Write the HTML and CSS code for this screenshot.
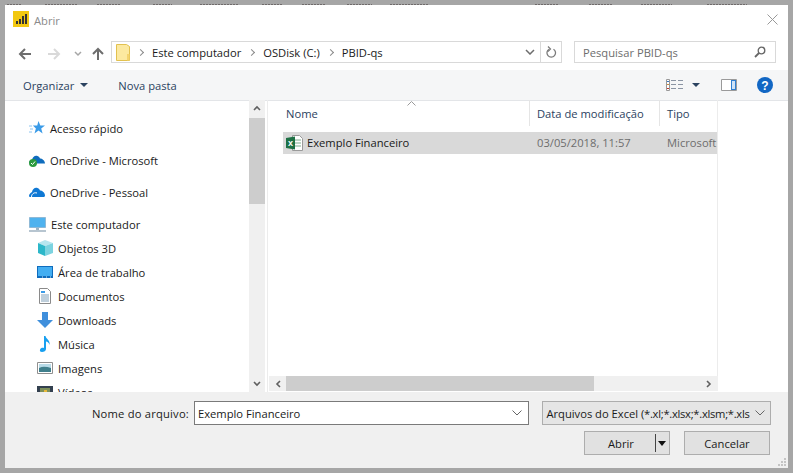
FILE: index.html
```html
<!DOCTYPE html>
<html lang="en">
<head>
    <meta charset="UTF-8">
    <title>Abrir</title>
    <link rel="stylesheet" href="styles.css">
</head>
<body>
<!-- bits of the window behind the dialog, showing above its top edge -->
<svg class="backdrop" width="793" height="5" viewBox="0 0 793 5">
    <path d="M7 4.5h15M45 4.5h33M97 4.5h23M153 4.5h19M200 4.5h38M262 4.5h21M302 4.5h23M347 4.5h25M390 4.5h38M535 4.5h23M589 4.5h24M641 4.5h31M707 4.5h40" stroke="#6f6a6a" stroke-dasharray="2 1" fill="none"/>
</svg>
<div class="dialog">
    <div class="titlebar">
        <svg class="appicon" width="16" height="16" viewBox="0 0 16 16">
            <rect width="16" height="16" fill="#f2c811"/>
            <path d="M3 10h2v3H3zM6 8h2v5H6zM9 5h2v8H9zM12 3h2v10h-2z" fill="#333"/>
        </svg>
        <span class="title">Abrir</span>
        <svg class="close" width="11" height="11" viewBox="0 0 11 11">
            <path d="M.5.5l10 10M10.5.5l-10 10" stroke="#999" fill="none"/>
        </svg>
    </div>

    <div class="navbar">
        <svg class="nav-arrows" width="90" height="16" viewBox="0 0 90 16">
            <path d="M13 8H2M7 3L2 8l5 5" stroke="#6d6d6d" stroke-width="2" fill="none"/>
            <path d="M30 8h11M36 3l5 5-5 5" stroke="#d9d9d9" stroke-width="2" fill="none"/>
            <path d="M57 6l3 3 3-3" stroke="#a6a6a6" stroke-width="1.5" fill="none"/>
            <path d="M80 14V3M75 8l5-5 5 5" stroke="#6d6d6d" stroke-width="2" fill="none"/>
        </svg>
        <div class="address">
            <svg class="folder" width="14" height="17" viewBox="0 0 14 17">
                <path d="M.5.5h10l3 2v14H.5z" fill="#fce9a0" stroke="#e2c14f"/>
                <path d="M11 10h2.5v6.500H11z" fill="#f3d36f"/>
            </svg>
            <span class="crumb-sep"></span>
            <span class="crumb">Este computador</span>
            <span class="crumb-sep"></span>
            <span class="crumb">OSDisk (C:)</span>
            <span class="crumb-sep"></span>
            <span class="crumb">PBID-qs</span>
            <svg class="addr-chevron" width="10" height="6" viewBox="0 0 10 6">
                <path d="M1 1l4 4 4-4" stroke="#6d6d6d" stroke-width="1.5" fill="none"/>
            </svg>
            <div class="refresh">
                <svg width="12" height="13" viewBox="0 0 12 13">
                    <path d="M4 3.2a4.3 4.3 0 1 0 4.5 0" stroke="#7a7a7a" stroke-width="1.3" fill="none"/>
                    <path d="M3 .5L5.500 3 3 5.500" stroke="#7a7a7a" stroke-width="1.2" fill="none"/>
                </svg>
            </div>
        </div>
        <div class="search">
            <span>Pesquisar PBID-qs</span>
            <svg width="12" height="12" viewBox="0 0 12 12">
                <circle cx="7.5" cy="4.5" r="3.3" stroke="#666" stroke-width="1.3" fill="none"/>
                <path d="M5 7l-4 4" stroke="#666" stroke-width="1.8"/>
            </svg>
        </div>
    </div>

    <div class="toolbar">
        <span class="tool">Organizar</span>
        <span class="caret"></span>
        <span class="tool newfolder">Nova pasta</span>
        <svg class="viewicon" width="17" height="12" viewBox="0 0 17 12">
            <path d="M.5.5h3v11h-3z" fill="#fff" stroke="#999"/>
            <path d="M1 2h2v1H1z" fill="#3a78c2"/>
            <path d="M1 5h2v1H1z" fill="#d08a3a"/>
            <path d="M1 9h2v1H1z" fill="#c0392b"/>
            <path d="M5 1.5h5M12 1.5h5M5 5.5h5M12 5.5h5M5 9.5h5M12 9.5h5" stroke="#8a94a3"/>
        </svg>
        <span class="caret view-caret"></span>
        <svg class="paneicon" width="16" height="12" viewBox="0 0 16 12">
            <path d="M.5.5h15v11H.5z" fill="#fff" stroke="#9a9a9a"/>
            <path d="M10 1h5v10h-5z" fill="#2f7fd1"/>
            <path d="M11 2h3v8h-3z" fill="#cfe3f7"/>
        </svg>
        <svg class="helpicon" width="16" height="16" viewBox="0 0 16 16">
            <circle cx="8" cy="8" r="8" fill="#1267c4"/>
            <text x="8" y="12.5" text-anchor="middle" class="helpmark">?</text>
        </svg>
    </div>

    <div class="content">
        <div class="sidebar">
            <div class="tree">
                <div class="node top">
                    <svg width="16" height="14" viewBox="0 0 16 14">
                        <path d="M9.500 0l1.800 4.500H16l-3.800 3 1.400 5-4.100-2.900-4 2.900 1.400-5-3-3h4.300z" fill="#3a9be8"/>
                        <path d="M0 5h3M1 8h3M0 11h3" stroke="#8cc4f0"/>
                    </svg>
                    <span>Acesso rápido</span>
                </div>
                <div class="node top">
                    <svg width="16" height="13" viewBox="0 0 16 13">
                        <path d="M0 9c0-2 1.500-3 3-3 .5-3 3-5 5.500-4 1.500.5 2 1.500 2.500 2.500 2 0 5 2 5 5H5z" fill="#0f6cbd"/>
                        <circle cx="4" cy="9" r="4" fill="#2b9a3e"/>
                        <path d="M2 9l1.500 1.500L6 7.500" stroke="#fff" fill="none"/>
                    </svg>
                    <span>OneDrive - Microsoft</span>
                </div>
                <div class="node top">
                    <svg width="16" height="11" viewBox="0 0 16 11">
                        <path d="M0 9c0-2 1.500-3 3-4 .5-3 3-5 5.500-4 1.500.5 2 1.500 2.500 2.500 2 0 5 2 5 5 0 1-1 1.500-1.500 1.500h-13C.5 10 0 9.500 0 9z" fill="#0f78d4"/>
                        <path d="M2.500 10c0-2.500 2-5 5.500-4" stroke="#fff" fill="none"/>
                    </svg>
                    <span>OneDrive - Pessoal</span>
                </div>
                <div class="node top pc">
                    <svg width="17" height="15" viewBox="0 0 17 15">
                        <path d="M.5.5h16v10H.5z" fill="#4fb2ee" stroke="#8fb9d6"/>
                        <path d="M7 11h3v2H7z" fill="#9cb3c4"/>
                        <path d="M0 14h17" stroke="#9fb2c0" stroke-width="1.5"/>
                    </svg>
                    <span>Este computador</span>
                </div>
                <div class="node child">
                    <svg width="16" height="16" viewBox="0 0 16 16">
                        <path d="M1 3l7-3 8 3-8 3z" fill="#b7e6ef"/>
                        <path d="M1 3l7 3v10l-7-3z" fill="#2cb7c9"/>
                        <path d="M16 3L8 6v10l8-3z" fill="#7cd3e0"/>
                    </svg>
                    <span>Objetos 3D</span>
                </div>
                <div class="node child">
                    <svg width="16" height="12" viewBox="0 0 16 12">
                        <path d="M0 0h16v12H0z" fill="#0f6cbd"/>
                        <path d="M1 1h14v9H1z" fill="#43aef2"/>
                        <path d="M5 11h1M9 11h1M13 11h1" stroke="#cfe8fa"/>
                    </svg>
                    <span>Área de trabalho</span>
                </div>
                <div class="node child">
                    <svg width="16" height="16" viewBox="0 0 16 16">
                        <path d="M2.500.5h8l3 3v12h-11z" fill="#fff" stroke="#8a8a8a"/>
                        <path d="M4 3h4v2H4z" fill="#3a9be8"/>
                        <path d="M4 7h8M4 9h8M4 11h8M4 13h8" stroke="#7f9fb8"/>
                    </svg>
                    <span>Documentos</span>
                </div>
                <div class="node child">
                    <svg width="16" height="16" viewBox="0 0 16 16">
                        <path d="M5 0h6v8h5l-8 8-8-8h5z" fill="#3f8fdc"/>
                    </svg>
                    <span>Downloads</span>
                </div>
                <div class="node child">
                    <svg width="16" height="16" viewBox="0 0 16 16">
                        <path d="M7 0h1.500c.3 3 5 4 4 9-.5-2-2-3.500-3.500-3.500V13c0 2-2 3-4 3-1.500 0-2.500-1-2-2.300C3.500 12 5.500 11.500 7 12z" fill="#18a0f0"/>
                    </svg>
                    <span>Música</span>
                </div>
                <div class="node child">
                    <svg width="16" height="12" viewBox="0 0 16 12">
                        <path d="M.5.5h15v11H.5z" fill="#fff" stroke="#8f8f8f"/>
                        <path d="M2 2h12v4H2z" fill="#b8dbe8"/>
                        <path d="M2 6c4-2 8-1 12 0v4H2z" fill="#3f7f8c"/>
                    </svg>
                    <span>Imagens</span>
                </div>
                <div class="node child">
                    <svg width="16" height="12" viewBox="0 0 16 12">
                        <path d="M0 0h16v12H0z" fill="#33404f"/>
                        <path d="M3 2h10v8H3z" fill="#7d8f5a"/>
                        <path d="M7 4h3v4H7z" fill="#e8b93a"/>
                    </svg>
                    <span>Vídeos</span>
                </div>
            </div>
            <div class="vscroll">
                <svg class="sb-arrow" width="8" height="6" viewBox="0 0 8 6">
                    <path d="M1 5l3-3 3 3" stroke="#606060" stroke-width="1.6" fill="none"/>
                </svg>
                <div class="vthumb"></div>
                <svg class="sb-arrow bottom-arrow" width="8" height="6" viewBox="0 0 8 6">
                    <path d="M1 1l3 3 3-3" stroke="#606060" stroke-width="1.6" fill="none"/>
                </svg>
            </div>
        </div>

        <div class="files">
            <div class="listing">
                <svg class="sortmark" width="9" height="5" viewBox="0 0 9 5">
                    <path d="M.5 4.5l4-4 4 4" stroke="#9a9a9a" fill="none"/>
                </svg>
                <div class="headers">
                    <span class="col col-name">Nome</span>
                    <span class="col col-date">Data de modificação</span>
                    <span class="col col-type">Tipo</span>
                </div>
                <div class="row">
                    <div class="col-name cell-name">
                        <svg width="18" height="16" viewBox="0 0 18 16">
                            <path d="M7.5.5h7l3 3v12h-10z" fill="#fff" stroke="#9a9a9a"/>
                            <path d="M10 5h6M10 8h6M10 11h6" stroke="#7fae8f"/>
                            <path d="M1 3l9-1.500v13L1 13z" fill="#1e7145"/>
                            <text x="5.5" y="11" text-anchor="middle" class="xlmark">x</text>
                        </svg>
                        <span>Exemplo Financeiro</span>
                    </div>
                    <span class="col-date cell">03/05/2018, 11:57</span>
                    <span class="col-type cell">Microsoft</span>
                </div>
            </div>
            <div class="hscroll">
                <svg width="6" height="8" viewBox="0 0 6 8" class="h-left">
                    <path d="M5 1L2 4l3 3" stroke="#606060" stroke-width="1.6" fill="none"/>
                </svg>
                <div class="hthumb"></div>
                <svg width="6" height="8" viewBox="0 0 6 8" class="h-right">
                    <path d="M1 1l3 3-3 3" stroke="#606060" stroke-width="1.6" fill="none"/>
                </svg>
            </div>
        </div>
    </div>

    <div class="footer">
        <div class="footer-row">
            <label class="namelabel">Nome do arquivo:</label>
            <div class="nameinput">
                <span>Exemplo Financeiro</span>
                <svg width="10" height="6" viewBox="0 0 10 6">
                    <path d="M.5.5L5 5 9.500.5" stroke="#666" fill="none"/>
                </svg>
            </div>
            <div class="filetype">
                <span class="filetype-text">Arquivos do Excel <span class="patterns">(*.xl;*.xlsx;*.xlsm;*.xls</span></span>
                <svg width="10" height="6" viewBox="0 0 10 6">
                    <path d="M.5.5L5 5 9.500.5" stroke="#666" fill="none"/>
                </svg>
            </div>
        </div>
        <div class="footer-row buttons">
            <div class="btn btn-open">
                <span class="btn-label">Abrir</span>
                <span class="btn-split"></span>
                <span class="btn-caret"></span>
            </div>
            <div class="btn btn-cancel">Cancelar</div>
        </div>
        <svg class="grip" width="8" height="8" viewBox="0 0 8 8">
            <path d="M6 0h2v2H6zM3 3h2v2H3zM6 3h2v2H6zM0 6h2v2H0zM3 6h2v2H3zM6 6h2v2H6z" fill="#c4c4c4"/>
        </svg>
    </div>
</div>
</body>
</html>
```

FILE: styles.css
```css
html, body {
    margin: 0;
    height: 100%;
}

body {
    background: #a6a6a6;
    padding: 5px;
    box-sizing: border-box;
    overflow: hidden;
    font-family: "Open Sans", "Noto Sans", sans-serif;
    font-size: 11.2px;
    color: #1a1a1a;
}

svg {
    display: block;
    flex: none;
}

.backdrop {
    position: absolute;
    left: 0;
    top: 0;
}

.dialog {
    width: 783px;
    height: 463px;
    background: #fff;
    display: flex;
    flex-direction: column;
    position: relative;
}

/* title bar */
.titlebar {
    height: 30px;
    display: flex;
    align-items: center;
    padding: 0 10px 0 8px;
    box-sizing: border-box;
}

.appicon,
.close {
    margin-top: -2px;
}

.title {
    margin-left: 5px;
    color: #8a8a8a;
    flex: 1;
}

/* address row */
.navbar {
    height: 35px;
    display: flex;
    align-items: flex-start;
    padding: 6px 12px 0 13px;
    box-sizing: border-box;
}

.nav-arrows {
    margin-top: 5px;
    margin-right: 3px;
}

.address {
    width: 451px;
    height: 22px;
    border: 1px solid #d9d9d9;
    box-sizing: border-box;
    display: flex;
    align-items: center;
    padding-left: 4px;
}

.crumb-sep {
    width: 4px;
    height: 4px;
    border-top: 1.5px solid #8a8a8a;
    border-right: 1.5px solid #8a8a8a;
    transform: rotate(45deg);
    margin: 0 9px 0 8px;
}

.addr-chevron {
    margin-left: auto;
    margin-right: 5px;
}

.refresh {
    width: 20px;
    height: 20px;
    border-left: 1px solid #d9d9d9;
    display: flex;
    align-items: center;
    justify-content: center;
}

.search {
    width: 202px;
    height: 22px;
    margin-left: 12px;
    border: 1px solid #d9d9d9;
    box-sizing: border-box;
    display: flex;
    align-items: center;
    justify-content: space-between;
    padding: 0 9px 0 8px;
    color: #6d6d6d;
}

/* toolbar */
.toolbar {
    height: 30px;
    background: #f5f6f7;
    border-bottom: 1px solid #e3e5e8;
    display: flex;
    align-items: center;
    padding-left: 18px;
    padding-right: 15px;
    color: #2b4260;
    margin-bottom: -1px;
}

.caret {
    width: 0;
    height: 0;
    border-left: 4px solid transparent;
    border-right: 4px solid transparent;
    border-top: 4px solid #2b4260;
    margin-left: 6px;
}

.newfolder {
    margin-left: 30px;
    flex: 1;
}

.view-caret {
    margin-left: 9px;
}

.paneicon {
    margin-left: 21px;
}

.helpicon {
    margin-left: 20px;
}

.helpmark {
    font-family: "Liberation Sans", sans-serif;
    font-size: 12px;
    font-weight: bold;
    fill: #fff;
}

/* sidebar and file list */
.content {
    height: 292px;
    display: flex;
    overflow: hidden;
}

.sidebar {
    width: 260px;
    display: flex;
    flex: none;
}

.tree {
    width: 244px;
    overflow: hidden;
    padding-top: 12px;
    box-sizing: border-box;
}

.node {
    display: flex;
    align-items: center;
    height: 24px;
}

.node svg {
    margin-right: 5px;
}

.top {
    height: 32px;
    padding-left: 24px;
}

.pc {
    margin-bottom: -4px;
}

.child {
    padding-left: 32px;
}

.node span {
    white-space: nowrap;
}

.vscroll {
    width: 16px;
    background: #f0f0f0;
    display: flex;
    flex-direction: column;
    align-items: center;
}

.sb-arrow {
    margin-top: 5px;
}

.vthumb {
    width: 16px;
    height: 86px;
    margin-top: 7px;
    background: #cdcdcd;
}

.bottom-arrow {
    margin-top: auto;
    margin-bottom: 5px;
}

.files {
    flex: 1;
    display: flex;
    flex-direction: column;
    border-left: 1px solid #ececec;
    margin-left: 2px;
    padding-right: 70px;
    min-width: 0;
}

.listing {
    flex: 1;
    border-right: 1px solid #ececec;
    position: relative;
    padding-left: 15px;
}

.sortmark {
    position: absolute;
    left: 139px;
    top: 1px;
}

.headers {
    height: 26px;
    display: flex;
    color: #2b4260;
    margin-bottom: 6px;
}

.col {
    border-right: 1px solid #e5e5e5;
    box-sizing: border-box;
    padding: 6px 0 0 3px;
}

.col-name {
    width: 247px;
    flex: none;
}

.col-date {
    width: 130px;
    flex: none;
    padding-left: 7px;
}

.col-type {
    flex: 1;
    min-width: 0;
    border-right: 0;
    padding-left: 7px;
    overflow: hidden;
}

.row {
    height: 22px;
    background: #d9d9d9;
    display: flex;
    align-items: center;
    padding-bottom: 1px;
    box-sizing: border-box;
}

.cell-name {
    display: flex;
    align-items: center;
    padding-left: 2px;
    box-sizing: border-box;
}

.cell-name svg {
    margin-right: 4px;
}

.xlmark {
    font-family: "Liberation Sans", sans-serif;
    font-size: 9px;
    font-weight: bold;
    fill: #fff;
}

.cell {
    color: #6d6d6d;
    box-sizing: border-box;
    white-space: nowrap;
}

.hscroll {
    height: 15px;
    margin-bottom: 1px;
    margin-left: 1px;
    background: #f0f0f0;
    display: flex;
    align-items: center;
}

.h-left {
    margin-left: 6px;
}

.hthumb {
    width: 308px;
    height: 15px;
    margin-left: 5px;
    background: #cdcdcd;
}

.h-right {
    margin-left: auto;
    margin-right: 6px;
}

/* footer */
.footer {
    flex: 1;
    background: #f0f0f0;
    padding: 9px 17px 0 0;
    box-sizing: border-box;
    position: relative;
}

.footer-row {
    display: flex;
    align-items: center;
}

.namelabel {
    margin-left: 87px;
    width: 97px;
    margin-right: 5px;
    white-space: nowrap;
    letter-spacing: .2px;
}

.nameinput {
    width: 336px;
    height: 24px;
    background: #fff;
    border: 1px solid #7a7a7a;
    box-sizing: border-box;
    display: flex;
    align-items: center;
    justify-content: space-between;
    padding: 0 6px 0 3px;
}

.filetype {
    width: 229px;
    height: 24px;
    margin-left: 13px;
    background: #e5e5e5;
    border: 1px solid #adadad;
    box-sizing: border-box;
    display: flex;
    align-items: center;
    justify-content: space-between;
    padding: 0 5px 0 3px;
    white-space: nowrap;
}

.patterns {
    letter-spacing: -.28px;
}

.buttons {
    justify-content: flex-end;
    margin-top: 6px;
    margin-right: 1px;
}

.btn {
    height: 24px;
    background: #e1e1e1;
    border: 1px solid #adadad;
    box-sizing: border-box;
    display: flex;
    align-items: center;
    justify-content: center;
}

.btn-open {
    width: 86px;
    position: relative;
}

.btn-label {
    margin-right: 18px;
    margin-left: 6px;
}

.btn-split {
    width: 1px;
    height: 18px;
    background: #444;
    position: absolute;
    right: 13px;
    top: 2px;
}

.btn-caret {
    width: 0;
    height: 0;
    border-left: 4px solid transparent;
    border-right: 4px solid transparent;
    border-top: 5px solid #111;
    position: absolute;
    right: 3px;
    top: 9px;
}

.btn-cancel {
    width: 86px;
    margin-left: 14px;
}

.grip {
    position: absolute;
    right: 2px;
    bottom: 2px;
}
```
